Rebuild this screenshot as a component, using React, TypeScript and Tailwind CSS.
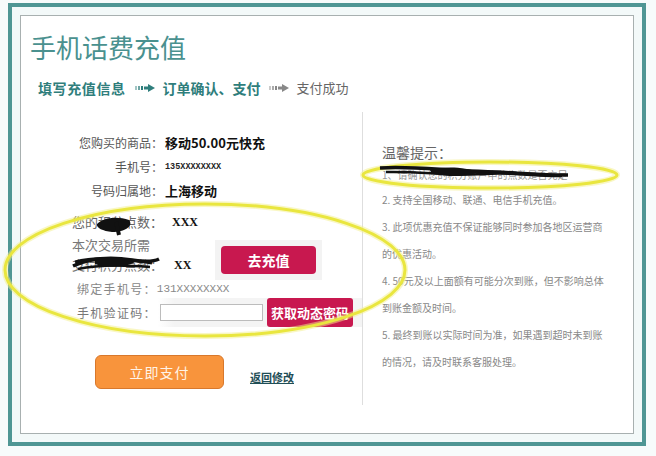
import React from "react";

const Arrow = ({ color }: { color: string }) => (
  <svg width="20" height="8" viewBox="0 0 20 8">
    <rect x="0" y="2" width="2" height="4" fill={color} opacity="0.45" />
    <rect x="3" y="2" width="2" height="4" fill={color} opacity="0.7" />
    <rect x="6" y="2" width="2" height="4" fill={color} />
    <rect x="9" y="2.5" width="5" height="3" fill={color} />
    <path d="M13 0 L20 4 L13 8 Z" fill={color} />
  </svg>
);

const tips = [
  "2. 支持全国移动、联通、电信手机充值。",
  "3. 此项优惠充值不保证能够同时参加各地区运营商",
  "的优惠活动。",
  "4. 50元及以上面额有可能分次到账，但不影响总体",
  "到账金额及时间。",
  "5. 最终到账以实际时间为准，如果遇到超时未到账",
  "的情况，请及时联系客服处理。",
];

export default function App() {
  return (
    <div className="relative w-[656px] h-[456px] overflow-hidden bg-[#f7fbfb] font-['Noto_Sans_CJK_SC',sans-serif]">
      {/* outer teal frame */}
      <div className="ml-[8px] mt-[3px] w-[638px] h-[443px] border-4 border-[#4f9694] bg-[#f3f9f9] p-[8px]">
        <div className="flex h-full flex-col border border-[#a8b0b0] bg-white">
          <h1 className="mt-[15px] pl-[9px] text-[26px] leading-[32px] font-normal text-[#4a918f]">
            手机话费充值
          </h1>

          {/* steps */}
          <div className="mt-[15px] flex h-[20px] items-center pl-[17px]">
            <span className="text-[14px] font-bold tracking-[0.6px] text-[#2f7e7c]">填写充值信息</span>
            <span className="ml-[9px] mr-[8px] flex items-center">
              <Arrow color="#2f7e7c" />
            </span>
            <span className="text-[14px] font-bold text-[#2f7e7c]">订单确认、支付</span>
            <span className="ml-[8px] mr-[8px] flex items-center">
              <Arrow color="#888888" />
            </span>
            <span className="text-[13px] text-[#666666]">支付成功</span>
          </div>

          {/* body */}
          <div className="mt-[14px] flex">
            {/* left column */}
            <div className="h-[293px] w-[342px] border-r border-[#dedede] pt-[19px]">
              <div className="grid grid-cols-[142px_1fr] gap-x-[2px] text-[12px] text-[#555555]">
                <div className="flex h-[24px] items-center justify-end">您购买的商品：</div>
                <div className="flex h-[24px] items-center text-[13px] font-bold text-[#111111]">移动50.00元快充</div>
                <div className="flex h-[24px] items-center justify-end">手机号：</div>
                <div className="flex h-[24px] items-center font-['Liberation_Mono',monospace] text-[8.5px] font-bold text-[#222222]">135XXXXXXXX</div>
                <div className="flex h-[24px] items-center justify-end">号码归属地：</div>
                <div className="flex h-[24px] items-center text-[13px] font-bold text-[#111111]">上海移动</div>
              </div>

              <div className="mt-[9px] flex h-[20px] items-center pl-[51px] text-[13px] text-[#666666]">
                <span className="w-[100px]">您的积分点数：</span>
                <span className="font-['Liberation_Serif',serif] text-[12px] font-bold text-[#111111]">XXX</span>
              </div>

              <div className="mt-[3px] flex pl-[51px]">
                <div className="w-[143px] text-[13px] text-[#777777]">
                  <div className="flex h-[20px] items-center">本次交易所需</div>
                  <div className="flex h-[20px] items-center">
                    <span className="w-[102px]">支付积分点数：</span>
                    <span className="font-['Liberation_Serif',serif] text-[12px] font-bold text-[#111111]">XX</span>
                  </div>
                </div>
                <div className="mt-[5px] bg-[#f3f3f3] p-[6px]">
                  <button className="flex h-[28px] w-[95px] items-center justify-center rounded-[4px] bg-[#c8184f] text-[14px] font-bold text-white">
                    去充值
                  </button>
                </div>
              </div>

              <div className="flex h-[18px] items-center pl-[56px] text-[12px] tracking-[1.3px] text-[#888888]">
                <span>绑定手机号：</span>
                <span className="font-['Liberation_Mono',monospace] text-[11px] tracking-[0px]">131XXXXXXXX</span>
              </div>

              <div className="flex h-[29px] items-center bg-[linear-gradient(90deg,#ffffff_40%,#f4f4f4_45%)] pl-[56px] pr-[8px] text-[12px] tracking-[1.3px] text-[#777777]">
                <span className="w-[83px]">手机验证码：</span>
                <div className="h-[17px] w-[103px] border border-[#bcbcbc] bg-white" />
                <button className="ml-[4px] flex h-[29px] w-[86px] items-center justify-center rounded-[3px] bg-[#c8184f] text-[13px] font-bold tracking-[0px] text-white">
                  获取动态密码
                </button>
              </div>

              <div className="mt-[28px] flex items-center pl-[74px]">
                <button className="flex h-[34px] w-[129px] items-center justify-center rounded-[6px] border border-[#d8782c] bg-[#f8943c] text-[14px] tracking-[1px] text-[#fff3e6]">
                  立即支付
                </button>
                <a className="ml-[26px] mt-[10px] text-[11px] font-bold text-[#1f4e56] underline">返回修改</a>
              </div>
            </div>

            {/* right column */}
            <div className="pl-[19px] pt-[30px]">
              <div className="flex h-[20px] items-center text-[14px] text-[#666666]">温馨提示：</div>
              <div className="flex h-[24px] items-center text-[10px] text-[#999999]">1、请确认您的积分账户中的点数是否充足</div>
              {tips.map((t) => (
                <div key={t} className="flex h-[27px] items-center text-[10px] text-[#888888]">
                  {t}
                </div>
              ))}
            </div>
          </div>
        </div>
      </div>

      {/* highlighter marks and redactions drawn over the page */}
      <svg className="pointer-events-none absolute left-0 top-0" width="656" height="456" viewBox="0 0 656 456">
        <ellipse cx="205" cy="270" rx="200" ry="66" fill="none" stroke="#f3f08a" strokeWidth="6" opacity="0.5" />
        <ellipse cx="205" cy="270" rx="200" ry="66" fill="none" stroke="#e9e63f" strokeWidth="3" />
        <ellipse cx="490" cy="175" rx="127" ry="13" fill="none" stroke="#f3f08a" strokeWidth="6" opacity="0.5" />
        <ellipse cx="490" cy="175" rx="127" ry="13" fill="none" stroke="#e9e63f" strokeWidth="3" />
        <path d="M380 168 C410 166 440 170 470 171 C510 172 535 175 568 175" fill="none" stroke="#111" strokeWidth="3.5" />
        <path d="M386 172 C420 171 450 176 485 174 C515 172 540 177 562 176" fill="none" stroke="#111" strokeWidth="2.5" />
        <path d="M430 170 C445 166 465 167 478 172 C470 177 450 177 432 174 Z" fill="#111" />
        <path d="M97 224 C104 217 118 216 129 220 C134 226 125 232 112 232 C103 231 96 228 97 224 Z" fill="#111" />
        <path d="M116 222 L119 235" stroke="#111" strokeWidth="4" />
        <path d="M73 266 C90 258 112 257 132 260 C146 262 155 261 159 259" fill="none" stroke="#111" strokeWidth="3.5" />
        <path d="M75 262 C95 256 122 258 152 263" fill="none" stroke="#111" strokeWidth="3" />
        <path d="M78 269 C100 264 126 265 150 267" fill="none" stroke="#111" strokeWidth="2.5" />
        <path d="M95 261 C105 256 125 256 135 262 C125 268 105 268 95 264 Z" fill="#111" />
      </svg>
    </div>
  );
}
